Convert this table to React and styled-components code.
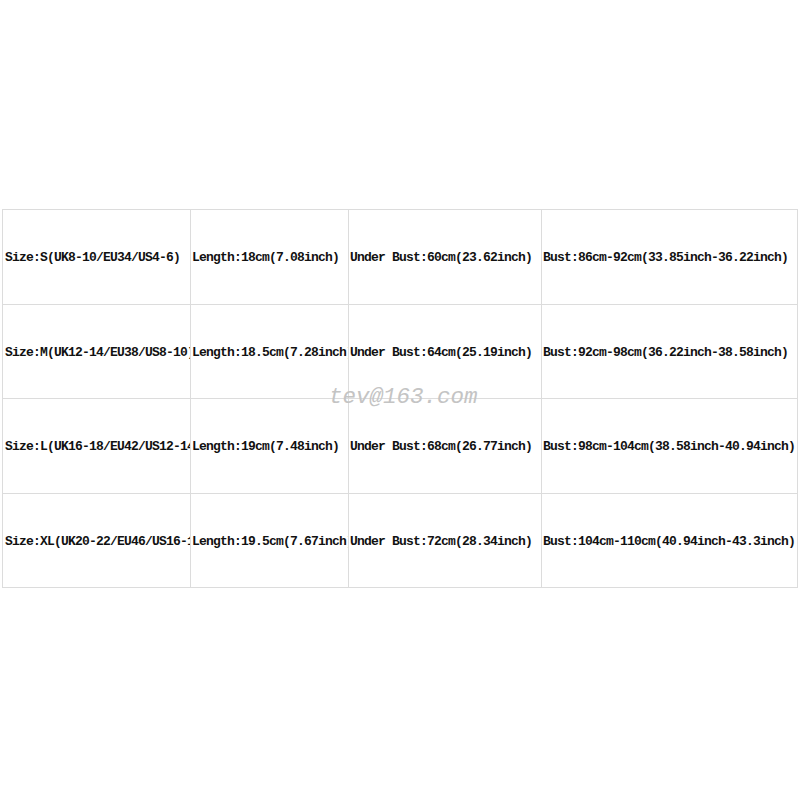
import React from "react";
import styled, { createGlobalStyle } from "styled-components";

const rows = [
  [
    "Size:S(UK8-10/EU34/US4-6)",
    "Length:18cm(7.08inch)",
    "Under Bust:60cm(23.62inch)",
    "Bust:86cm-92cm(33.85inch-36.22inch)",
  ],
  [
    "Size:M(UK12-14/EU38/US8-10)",
    "Length:18.5cm(7.28inch)",
    "Under Bust:64cm(25.19inch)",
    "Bust:92cm-98cm(36.22inch-38.58inch)",
  ],
  [
    "Size:L(UK16-18/EU42/US12-14)",
    "Length:19cm(7.48inch)",
    "Under Bust:68cm(26.77inch)",
    "Bust:98cm-104cm(38.58inch-40.94inch)",
  ],
  [
    "Size:XL(UK20-22/EU46/US16-18)",
    "Length:19.5cm(7.67inch)",
    "Under Bust:72cm(28.34inch)",
    "Bust:104cm-110cm(40.94inch-43.3inch)",
  ],
];

const App = () => {
  return (
    <>
      <GlobalStyle />
      <Page>
        <SizeTable>
          {rows.map((row, r) =>
            row.map((text, c) => (
              <Cell key={`${r}-${c}`} first={c === 0}>
                {text}
              </Cell>
            ))
          )}
          <Watermark>tev@163.com</Watermark>
        </SizeTable>
      </Page>
    </>
  );
};

export default App;

const GlobalStyle = createGlobalStyle`
  html, body {
    margin: 0;
    padding: 0;
    background: #ffffff;
  }
`;

const Page = styled.div`
  width: 800px;
  height: 800px;
  padding: 209px 0 0 2px;
  box-sizing: border-box;
  background: #ffffff;
`;

const SizeTable = styled.div`
  position: relative;
  display: grid;
  grid-template-columns: 187px 157px 192px 255px;
  grid-template-rows: 94px 93px 94px 93px;
  gap: 1px;
  padding: 1px;
  width: 796px;
  box-sizing: border-box;
  background: #dcdcdc;
`;

const Cell = styled.div`
  display: flex;
  align-items: center;
  padding-left: ${({ first }) => (first ? "2px" : "1px")};
  padding-top: 1px;
  background: #ffffff;
  overflow: hidden;
  white-space: nowrap;
  font-family: "Liberation Mono", "DejaVu Sans Mono", monospace;
  font-size: 13px;
  letter-spacing: -0.8px;
  font-weight: bold;
  color: #111111;
`;

const Watermark = styled.div`
  position: absolute;
  left: 327px;
  top: 175px;
  font-family: "Liberation Mono", "DejaVu Sans Mono", monospace;
  font-style: italic;
  font-size: 22.5px;
  color: #c4c4c4;
  white-space: nowrap;
  pointer-events: none;
`;
